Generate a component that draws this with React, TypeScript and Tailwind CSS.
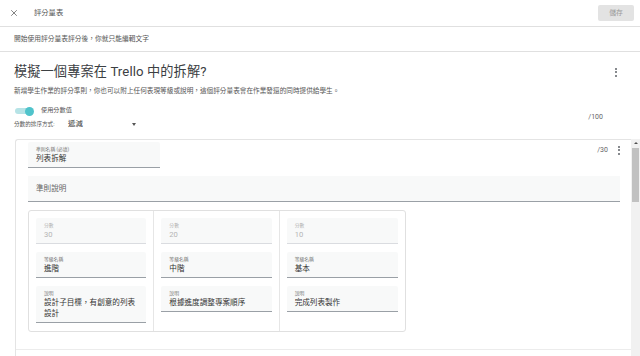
import { X } from 'lucide-react'

const FONT = "font-['Roboto','Noto_Sans_CJK_TC',sans-serif]"

function Kebab() {
  return (
    <div className="flex flex-col gap-[1.5px] items-center w-[4px]">
      <span className="w-[2px] h-[2px] rounded-full bg-[#5f6368]" />
      <span className="w-[2px] h-[2px] rounded-full bg-[#5f6368]" />
      <span className="w-[2px] h-[2px] rounded-full bg-[#5f6368]" />
    </div>
  )
}

function Field({ label, value, disabled, className = '' }: { label: string; value: string; disabled?: boolean; className?: string }) {
  return (
    <div className={`bg-[#f8f9f9] rounded-t-[2px] border-b px-[8px] pt-[4px] pb-[3px] ${disabled ? 'border-[#dadce0]' : 'border-[#9aa0a6]'} ${className}`}>
      <div className={`text-[4.8px] leading-[7px] ${disabled ? 'text-[#b0b0b0]' : 'text-[#777]'}`}>{label}</div>
      <div className={`text-[7.6px] leading-[11px] ${disabled ? 'text-[#b5b5b5]' : 'text-[#333]'}`}>{value}</div>
    </div>
  )
}

const levels = [
  { score: '30', name: '進階', desc: '設計子目標，有創意的列表設計' },
  { score: '20', name: '中階', desc: '根據進度調整專案順序' },
  { score: '10', name: '基本', desc: '完成列表製作' },
]

export default function App() {
  return (
    <div className={`w-[640px] h-[356px] overflow-hidden bg-white flex flex-col ${FONT}`}>
      <div className="h-[27px] shrink-0 border-b border-[#e0e0e0] flex items-center pl-[9px] pr-[6px]">
        <X size={10} strokeWidth={1.6} className="text-[#444]" />
        <span className="ml-[15px] text-[7.3px] text-[#555]">評分量表</span>
        <div className="ml-auto w-[36px] h-[16px] rounded-[2px] bg-[#e3e3e3] flex items-center justify-center text-[6.8px] text-[#9a9a9a]">儲存</div>
      </div>

      <div className="h-[25px] shrink-0 border-b border-[#e0e0e0] flex items-center px-[14px] text-[6.75px] text-[#555]">
        開始使用評分量表評分後，你就只能編輯文字
      </div>

      <div className="flex-1 flex flex-col min-h-0">
        <div className="px-[14px] pr-[22px] pt-[10px] h-[30px] flex items-center justify-between">
          <h1 className="text-[13.2px] text-[#3c4043] tracking-[0.1px]">模擬一個專案在 Trello 中的拆解?</h1>
          <Kebab />
        </div>
        <div className="px-[14px] mt-[4px] h-[12px] flex items-center text-[6.65px] text-[#555]">
          新增學生作業的評分準則，你也可以附上任何表現等級或說明，這個評分量表會在作業發還的同時提供給學生。
        </div>

        <div className="mt-[7px] pl-[14px] pr-[37px] flex items-center justify-between">
          <div className="flex flex-col">
            <div className="h-[12px] flex items-center">
              <div className="relative w-[17px] h-[6px] ml-[1px]">
                <div className="absolute inset-0 rounded-full bg-[#b6e3e6]" />
                <div className="absolute right-[-2px] top-[-1.5px] w-[9px] h-[9px] rounded-full bg-[#4fc3cb]" />
              </div>
              <span className="ml-[9px] text-[6.2px] text-[#555]">使用分數值</span>
            </div>
            <div className="mt-[1px] h-[12px] flex items-center">
              <span className="text-[5.6px] text-[#555] w-[54px]">分數的排序方式:</span>
              <span className="text-[7.4px] text-[#333] w-[64px]">遞減</span>
              <span className="w-0 h-0 border-l-[2.5px] border-r-[2.5px] border-t-[3px] border-l-transparent border-r-transparent border-t-[#555]" />
            </div>
          </div>
          <span className="text-[7px] text-[#666]">/100</span>
        </div>

        <div className="mt-[9px] flex-1 flex min-h-0">
          <div className="flex-1 ml-[15px] border-l border-t border-[#e4e4e4] rounded-tl-[3px] flex flex-col">
            <div className="pl-[12px] pr-[11px] pt-[2px] pb-[17px] border-b border-[#ececec]">
              <div className="flex items-start">
                <Field label="準則名稱 (必填)" value="列表拆解" className="w-[132px] h-[26px]" />
                <div className="ml-auto mr-[-1px] mt-[3px] flex items-center gap-[9px]">
                  <span className="text-[7px] text-[#666]">/30</span>
                  <Kebab />
                </div>
              </div>
              <div className="mt-[8px] h-[26px] bg-[#f8f9f9] border-b border-[#9aa0a6] flex items-center px-[8px] text-[7.6px] text-[#666]">
                準則說明
              </div>
              <div className="mt-[8px] w-[378px] h-[122px] border border-[#e0e0e0] rounded-[3px] grid grid-cols-3">
                {levels.map((l, i) => (
                  <div key={i} className={`px-[7px] pt-[7px] flex flex-col gap-[8px] ${i < 2 ? 'border-r border-[#e6e6e6]' : ''}`}>
                    <Field label="分數" value={l.score} disabled className="h-[26px]" />
                    <Field label="等級名稱" value={l.name} className="h-[26px]" />
                    <Field label="說明" value={l.desc} />
                  </div>
                ))}
              </div>
            </div>
            <div className="flex-1" />
          </div>
          <div className="w-[9px] bg-[#f1f1f1] flex flex-col items-center">
            <span className="mt-[3px] w-0 h-0 border-l-[2px] border-r-[2px] border-b-[2px] border-l-transparent border-r-transparent border-b-[#505050]" />
            <div className="mt-[4px] w-[7px] h-[54px] bg-[#c1c1c1]" />
          </div>
        </div>
      </div>
    </div>
  )
}
